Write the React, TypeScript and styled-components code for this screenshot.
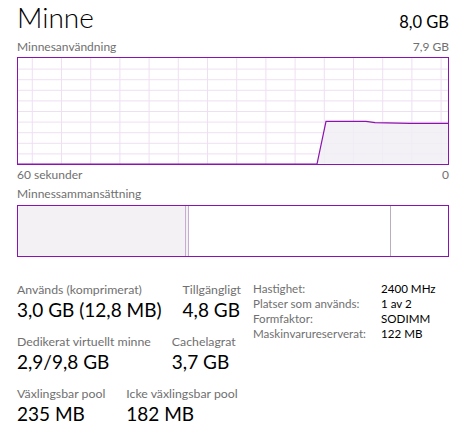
import React from 'react';
import styled, { createGlobalStyle } from 'styled-components';

const Global = createGlobalStyle`
  html, body { margin: 0; padding: 0; background: #ffffff; }
  body { font-family: Lato, "Open Sans", "DejaVu Sans", sans-serif; color: #000; }
`;

const Page = styled.div`
  width: 468px;
  height: 440px;
  box-sizing: border-box;
  padding: 0 19px 0 17px;
  display: flex;
  flex-direction: column;
`;

const Header = styled.header`
  display: flex;
  justify-content: space-between;
  align-items: baseline;
  height: 39px;
`;

const Title = styled.h1`
  margin: 0;
  font-size: 28px;
  font-weight: 300;
  line-height: 34px;
`;

const Total = styled.span`
  font-size: 16.5px;
`;

const AxisRow = styled.div<{ $top?: number }>`
  display: flex;
  justify-content: space-between;
  font-size: 12px;
  line-height: 15px;
  color: #707070;
  margin-top: ${(p) => p.$top ?? 0}px;
`;

const Chart = styled.div`
  margin-top: 3px;
  height: 106px;
  border: 1px solid #8b12ae;
  svg { display: block; }
`;

const CompBar = styled.div`
  margin-top: 4px;
  height: 50px;
  border: 1px solid #8b12ae;
  display: flex;
`;

const Segment = styled.div<{ $w?: number; $bg: string; $edge?: string }>`
  ${(p) => (p.$w !== undefined ? `width: ${p.$w}px;` : 'flex: 1;')}
  background: ${(p) => p.$bg};
  ${(p) => (p.$edge ? `border-right: 1px solid ${p.$edge};` : '')}
`;

const Bottom = styled.div`
  margin-top: 24px;
  display: flex;
  justify-content: space-between;
  align-items: flex-start;
`;

const StatsCol = styled.div`
  display: flex;
  flex-direction: column;
  gap: 11px;
`;

const StatRow = styled.div`
  display: flex;
  gap: 21px;
`;

const Stat = styled.div`
  display: flex;
  flex-direction: column;
`;

const StatLabel = styled.span`
  font-size: 12.3px;
  line-height: 17px;
  color: #707070;
  white-space: nowrap;
`;

const StatValue = styled.span`
  font-size: 19px;
  line-height: 24px;
  color: #000;
  white-space: nowrap;
`;

const Props = styled.dl`
  margin: 0;
  width: 196px;
  display: grid;
  grid-template-columns: 128px 1fr;
  font-size: 11.6px;
  line-height: 15px;
`;

const PropKey = styled.dt`
  color: #707070;
  margin: 0;
`;

const PropVal = styled.dd`
  color: #000;
  margin: 0;
`;

const W = 430;
const H = 106;
const hLines = Array.from({ length: 9 }, (_, i) => (i + 1) * (H / 10));
const vLines = Array.from({ length: 15 }, (_, i) => 14.3 + i * 29.2).filter((x) => x < W);

const data: [number, number][] = [
  [0, H],
  [299, H],
  [308, 63.3],
  [348, 63.3],
  [357, 64.7],
  [392, 65.3],
  [W, 65.3],
];

const linePts = data.map(([x, y]) => `${x},${y}`).join(' ');
const fillPts = `${linePts} ${W},${H} 0,${H}`;

const UsageGraph = () => (
  <svg width={W} height={H} viewBox={`0 0 ${W} ${H}`}>
    {hLines.map((y) => (
      <line key={`h${y}`} x1={0} x2={W} y1={y + 0.5} y2={y + 0.5} stroke="#efdff3" strokeWidth={1} />
    ))}
    {vLines.map((x) => (
      <line key={`v${x}`} x1={x} x2={x} y1={0} y2={H} stroke="#efdff3" strokeWidth={1} />
    ))}
    <polygon points={fillPts} fill="#f1eef4" fillOpacity={0.85} />
    <polyline points={linePts} fill="none" stroke="#8b12ae" strokeWidth={1.2} />
  </svg>
);

const stats = [
  [
    ['Används (komprimerat)', '3,0 GB (12,8 MB)'],
    ['Tillgängligt', '4,8 GB'],
  ],
  [
    ['Dedikerat virtuellt minne', '2,9/9,8 GB'],
    ['Cachelagrat', '3,7 GB'],
  ],
  [
    ['Växlingsbar pool', '235 MB'],
    ['Icke växlingsbar pool', '182 MB'],
  ],
];

const props = [
  ['Hastighet:', '2400 MHz'],
  ['Platser som används:', '1 av 2'],
  ['Formfaktor:', 'SODIMM'],
  ['Maskinvarureserverat:', '122 MB'],
];

export default function App() {
  return (
    <>
      <Global />
      <Page>
        <Header>
          <Title>Minne</Title>
          <Total>8,0 GB</Total>
        </Header>
        <AxisRow>
          <span>Minnesanvändning</span>
          <span>7,9 GB</span>
        </AxisRow>
        <Chart>
          <UsageGraph />
        </Chart>
        <AxisRow $top={2}>
          <span>60 sekunder</span>
          <span>0</span>
        </AxisRow>
        <AxisRow $top={4}>
          <span>Minnessammansättning</span>
        </AxisRow>
        <CompBar>
          <Segment $w={167} $bg="#f3f1f4" $edge="#c9abd2" />
          <Segment $w={2} $bg="#f3f1f4" $edge="#c9abd2" />
          <Segment $w={201} $bg="#ffffff" $edge="#b9aebd" />
          <Segment $bg="#ffffff" />
        </CompBar>
        <Bottom>
          <StatsCol>
            {stats.map((row, i) => (
              <StatRow key={i}>
                {row.map(([l, v]) => (
                  <Stat key={l}>
                    <StatLabel>{l}</StatLabel>
                    <StatValue>{v}</StatValue>
                  </Stat>
                ))}
              </StatRow>
            ))}
          </StatsCol>
          <Props>
            {props.map(([k, v]) => (
              <React.Fragment key={k}>
                <PropKey>{k}</PropKey>
                <PropVal>{v}</PropVal>
              </React.Fragment>
            ))}
          </Props>
        </Bottom>
      </Page>
    </>
  );
}
